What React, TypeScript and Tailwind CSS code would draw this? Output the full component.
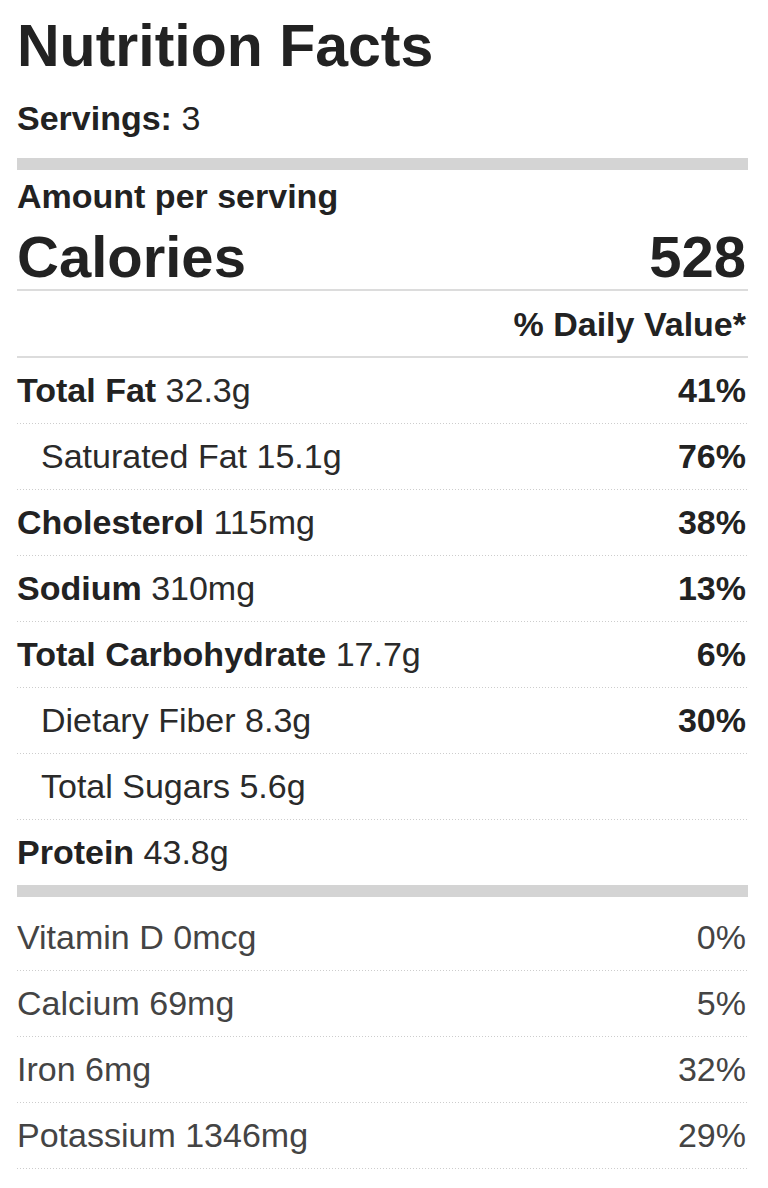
type Row = {
  label: string;
  amount: string;
  dv?: string;
  indent?: boolean;
};

const MAIN_ROWS: Row[] = [
  { label: 'Total Fat', amount: '32.3g', dv: '41%' },
  { label: 'Saturated Fat', amount: '15.1g', dv: '76%', indent: true },
  { label: 'Cholesterol', amount: '115mg', dv: '38%' },
  { label: 'Sodium', amount: '310mg', dv: '13%' },
  { label: 'Total Carbohydrate', amount: '17.7g', dv: '6%' },
  { label: 'Dietary Fiber', amount: '8.3g', dv: '30%', indent: true },
  { label: 'Total Sugars', amount: '5.6g', indent: true },
  { label: 'Protein', amount: '43.8g' },
];

const VITAMINS: Row[] = [
  { label: 'Vitamin D', amount: '0mcg', dv: '0%' },
  { label: 'Calcium', amount: '69mg', dv: '5%' },
  { label: 'Iron', amount: '6mg', dv: '32%' },
  { label: 'Potassium', amount: '1346mg', dv: '29%' },
];

// dotted hairline between rows
function Dots() {
  return (
    <div className="h-px w-full bg-[repeating-linear-gradient(to_right,#cdcdcd_0px,#cdcdcd_1px,transparent_1px,transparent_3px)]" />
  );
}

function NutrientRow({ row, last }: { row: Row; last: boolean }) {
  return (
    <>
      <div className="flex items-center justify-between py-[14px] text-[34px] leading-[37px] text-[#2a2a2a]">
        <div className={row.indent ? 'pl-[24px]' : ''}>
          {row.indent ? (
            <span>
              {row.label} {row.amount}
            </span>
          ) : (
            <span>
              <span className="font-bold text-[#222]">{row.label}</span> {row.amount}
            </span>
          )}
        </div>
        {row.dv && <span className="pr-[2px] font-bold text-[#222]">{row.dv}</span>}
      </div>
      {!last && <Dots />}
    </>
  );
}

export default function App() {
  return (
    <div
      className="min-h-[1188px] w-[768px] bg-white pt-[14px] pb-[17px] pl-[17px] pr-[20px] text-[#222]"
      style={{ fontFamily: '"Liberation Sans", Arial, Helvetica, sans-serif' }}
    >
      <h1 className="text-[59px] leading-[65px] font-bold">Nutrition Facts</h1>
      <p className="mt-[21px] text-[34px] leading-[37px]">
        <span className="font-bold">Servings:</span> 3
      </p>

      <div className="mt-[21px] h-[12px] bg-[#d4d4d4]" />

      <p className="mt-[8px] text-[34px] leading-[37px] font-bold">Amount per serving</p>
      <div className="mt-[9px] flex items-baseline justify-between text-[58px] leading-[65px] font-bold">
        <span>Calories</span>
        <span className="pr-[2px]">528</span>
      </div>
      <div className="h-[2px] bg-[#dcdcdc]" />

      <p className="mt-[15px] pr-[2px] text-right text-[34px] leading-[37px] font-bold">% Daily Value*</p>
      <div className="mt-[13px] h-[2px] bg-[#dcdcdc]" />

      {MAIN_ROWS.map((row, i) => (
        <NutrientRow key={row.label} row={row} last={i === MAIN_ROWS.length - 1} />
      ))}

      <div className="h-[12px] bg-[#d4d4d4]" />

      <div className="mt-[8px]">
        {VITAMINS.map((row) => (
          <div key={row.label}>
            <div className="flex items-center justify-between py-[14px] text-[34px] leading-[37px] text-[#444]">
              <span>
                {row.label} {row.amount}
              </span>
              <span className="pr-[2px]">{row.dv}</span>
            </div>
            <Dots />
          </div>
        ))}
      </div>
    </div>
  );
}
